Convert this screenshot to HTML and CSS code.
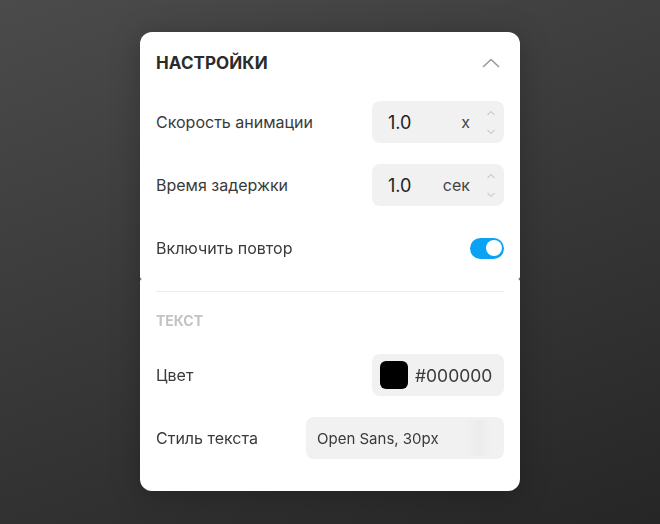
FILE: index.html
```html
<!DOCTYPE html>
<html lang="ru">
<head>
    <meta charset="UTF-8">
    <title>Настройки</title>
    <link rel="stylesheet" href="styles.css">
</head>
<body>
    <div class="panel">
        <div class="section section-top">
            <div class="header">
                <h2>НАСТРОЙКИ</h2>
                <svg class="chevron" width="18" height="10" viewBox="0 0 18 10"><path d="M1.5 8.5 L9 1.5 L16.5 8.5" fill="none" stroke="#9a9a9a" stroke-width="1.6" stroke-linecap="round" stroke-linejoin="round"/></svg>
            </div>

            <div class="row">
                <label>Скорость анимации</label>
                <div class="field number">
                    <span class="value">1.0</span>
                    <span class="unit">x</span>
                    <span class="spin">
                        <svg width="10" height="6" viewBox="0 0 10 6"><path d="M1.5 5 L5 1.5 L8.5 5" fill="none" stroke="#b5b5b5" stroke-width="1"/></svg>
                        <svg width="10" height="6" viewBox="0 0 10 6"><path d="M1.5 1 L5 4.5 L8.5 1" fill="none" stroke="#b5b5b5" stroke-width="1"/></svg>
                    </span>
                </div>
            </div>

            <div class="row">
                <label>Время задержки</label>
                <div class="field number">
                    <span class="value">1.0</span>
                    <span class="unit">сек</span>
                    <span class="spin">
                        <svg width="10" height="6" viewBox="0 0 10 6"><path d="M1.5 5 L5 1.5 L8.5 5" fill="none" stroke="#b5b5b5" stroke-width="1"/></svg>
                        <svg width="10" height="6" viewBox="0 0 10 6"><path d="M1.5 1 L5 4.5 L8.5 1" fill="none" stroke="#b5b5b5" stroke-width="1"/></svg>
                    </span>
                </div>
            </div>

            <div class="row">
                <label>Включить повтор</label>
                <div class="toggle"><span class="knob"></span></div>
            </div>
        </div>

        <div class="section section-bottom">
            <div class="divider"></div>
            <h3>ТЕКСТ</h3>

            <div class="row">
                <label>Цвет</label>
                <div class="field color">
                    <span class="swatch"></span>
                    <span class="hex">#000000</span>
                </div>
            </div>

            <div class="row">
                <label>Стиль текста</label>
                <div class="field font">
                    <span>Open Sans, 30px</span>
                    <span class="fade"></span>
                </div>
            </div>
        </div>
    </div>
</body>
</html>
```

FILE: styles.css
```css
html, body {
    height: 100%;
}
body {
    margin: 0;
    font-family: Inter, "Noto Sans", sans-serif;
    background: linear-gradient(160deg, #4b4b4b 0%, #3a3a3a 45%, #262626 100%);
    display: flex;
    justify-content: center;
    align-items: flex-start;
}
.panel {
    width: 380px;
    margin-top: 32px;
    display: flex;
    flex-direction: column;
    filter: drop-shadow(0 4px 14px rgba(0, 0, 0, 0.25));
}
.section {
    background-color: #fff;
    padding: 0 16px;
}
.section-top {
    border-radius: 12px 12px 2px 2px;
    padding-top: 17px;
    padding-bottom: 10px;
}
.section-bottom {
    border-radius: 2px 2px 12px 12px;
    padding-top: 12px;
    padding-bottom: 32px;
}
.header {
    height: 28px;
    display: flex;
    align-items: center;
    justify-content: space-between;
    margin-bottom: 24px;
}
.header h2 {
    margin: 0;
    font-size: 17px;
    font-weight: 700;
    color: #2b2b2b;
    letter-spacing: 0.1px;
}
.chevron {
    margin-right: 4px;
}
.row {
    height: 42px;
    display: flex;
    align-items: center;
    justify-content: space-between;
    margin-bottom: 21px;
}
.section-top .row:last-child,
.section-bottom .row:last-child {
    margin-bottom: 0;
}
label {
    font-size: 16px;
    color: #3a3a3a;
}
.field {
    height: 42px;
    box-sizing: border-box;
    background-color: #f1f1f1;
    border-radius: 8px;
    display: flex;
    align-items: center;
}
.number {
    width: 132px;
    padding: 0 8px 0 16px;
}
.value {
    font-size: 18px;
    color: #222;
    flex: 1;
}
.unit {
    font-size: 16px;
    color: #444;
}
.spin {
    display: flex;
    flex-direction: column;
    gap: 13px;
    margin-left: 16px;
}
.toggle {
    width: 34px;
    height: 21px;
    border-radius: 11px;
    background-color: #0aa2f3;
    display: flex;
    align-items: center;
    justify-content: flex-end;
    padding: 0 2px;
    box-sizing: border-box;
}
.knob {
    width: 16px;
    height: 16px;
    border-radius: 50%;
    background-color: #fff;
}
.divider {
    height: 1px;
    background-color: #ececec;
}
h3 {
    margin: 19px 0 23px;
    font-size: 14px;
    font-weight: 700;
    color: #c3c3c3;
    line-height: 20px;
}
.color {
    width: 132px;
    padding: 0 8px;
    gap: 7px;
}
.swatch {
    width: 28px;
    height: 28px;
    border-radius: 6px;
    background-color: #000;
}
.hex {
    font-size: 17.5px;
    color: #3a3a3a;
}
.font {
    width: 198px;
    padding: 0 11px;
    font-size: 15px;
    color: #3a3a3a;
    justify-content: space-between;
}
.fade {
    width: 24px;
    height: 36px;
    margin-right: 2px;
    background: linear-gradient(90deg, rgba(230,230,230,0) 0%, rgba(232,232,232,0.6) 50%, rgba(230,230,230,0) 100%);
}
```
